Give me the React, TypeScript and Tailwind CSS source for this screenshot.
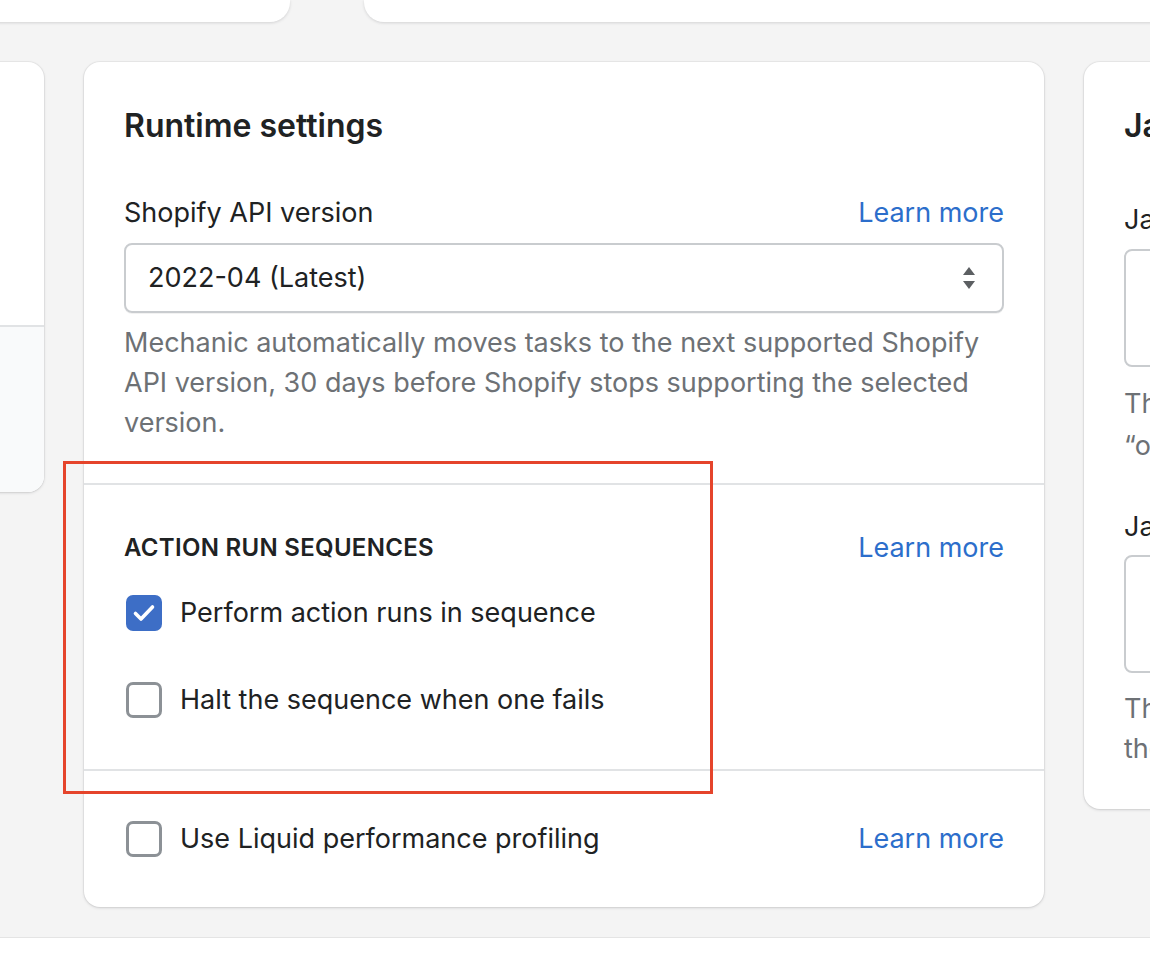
const font = { fontFamily: "Inter, 'Noto Sans', sans-serif" };

function Checkbox({ checked }: { checked?: boolean }) {
  if (checked) {
    return (
      <span className="ml-[2px] flex h-[36px] w-[36px] shrink-0 items-center justify-center rounded-[7px] bg-[#3d6ec6]">
        <svg width="36" height="36" viewBox="0 0 36 36" fill="none">
          <path d="M9.5 18.5l5.5 5.5 11.5-12" stroke="#fff" strokeWidth="3.6" strokeLinecap="round" strokeLinejoin="round" />
        </svg>
      </span>
    );
  }
  return <span className="ml-[2px] h-[36px] w-[36px] shrink-0 rounded-[7px] border-[3px] border-[#8c9196] bg-white" />;
}

function LearnMore() {
  return <a className="text-[27px] leading-[40px] text-[#2c6ecb]">Learn more</a>;
}

function CheckRow({ label, checked }: { label: string; checked?: boolean }) {
  return (
    <label className="flex h-[40px] items-center gap-[18px]">
      <Checkbox checked={checked} />
      <span className="text-[27px] leading-[40px] text-[#202223]">{label}</span>
    </label>
  );
}

function RuntimeCard() {
  return (
    <div className="w-[960px] shrink-0 rounded-[16px] bg-white shadow-[0_0_0_1px_rgba(63,63,68,0.05),0_1px_3px_rgba(63,63,68,0.18)]">
      <div className="px-[40px] pt-[44px] pb-[40px]">
        <h2 className="text-[32px] font-semibold leading-[40px] text-[#202223]">Runtime settings</h2>
        <div className="mt-[47px] flex items-center justify-between">
          <span className="text-[27px] leading-[40px] text-[#202223]">Shopify API version</span>
          <LearnMore />
        </div>
        <div className="mt-[10px] flex h-[70px] items-center justify-between rounded-[8px] border-2 border-[#c9cccf] pl-[22px] pr-[26px] shadow-[0_1px_0_rgba(0,0,0,0.05)]">
          <span className="text-[27px] text-[#202223]">2022-04 (Latest)</span>
          <svg width="14" height="22" viewBox="0 0 14 22">
            <path d="M7 0L13 8H1Z" fill="#5c5f62" />
            <path d="M7 22L13 14H1Z" fill="#5c5f62" />
          </svg>
        </div>
        <p className="mt-[10px] text-[27px] leading-[40px] text-[#6d7175]">
          Mechanic automatically moves tasks to the next supported Shopify API version, 30 days before Shopify stops supporting the selected version.
        </p>
      </div>
      <div className="border-t-2 border-[#e1e3e5] px-[40px] pt-[43px] pb-[49px]">
        <div className="flex items-center justify-between">
          <h3 className="text-[24px] font-semibold uppercase leading-[32px] tracking-[0.3px] text-[#202223]">Action run sequences</h3>
          <LearnMore />
        </div>
        <div className="mt-[25px] flex flex-col gap-[47px]">
          <CheckRow label="Perform action runs in sequence" checked />
          <CheckRow label="Halt the sequence when one fails" />
        </div>
      </div>
      <div className="flex items-center justify-between border-t-2 border-[#e1e3e5] px-[40px] pt-[48px] pb-[48px]">
        <CheckRow label="Use Liquid performance profiling" />
        <LearnMore />
      </div>
    </div>
  );
}

function JavaScriptCard() {
  return (
    <div className="w-[700px] shrink-0 self-start rounded-[16px] bg-white px-[40px] pt-[44px] pb-[40px] shadow-[0_0_0_1px_rgba(63,63,68,0.05),0_1px_3px_rgba(63,63,68,0.18)]">
      <h2 className="text-[32px] font-semibold leading-[40px] text-[#202223]">JavaScript</h2>
      <div className="mt-[54px] text-[27px] leading-[40px] text-[#202223]">JavaScript for the online store</div>
      <div className="mt-[9px] h-[118px] rounded-[8px] border-2 border-[#c9cccf]" />
      <p className="mt-[16px] whitespace-nowrap text-[27px] leading-[42px] text-[#6d7175]">
        This JavaScript is added to every page of the
        <br />
        “online store” theme.
      </p>
      <div className="mt-[40px] text-[27px] leading-[40px] text-[#202223]">JavaScript for the order status page</div>
      <div className="mt-[8px] h-[118px] rounded-[8px] border-2 border-[#c9cccf]" />
      <p className="mt-[16px] whitespace-nowrap text-[27px] leading-[40px] text-[#6d7175]">
        This JavaScript is added to the order status page,
        <br />
        the last page of checkout.
      </p>
    </div>
  );
}

export default function App() {
  return (
    <div style={font} className="relative h-[978px] w-[1150px] overflow-hidden bg-white">
      <div className="h-[938px] bg-[#f4f4f4] shadow-[inset_0_-1px_0_#e4e4e4]">
        <div className="ml-[-100px] flex gap-[74px]">
          <div className="h-[22px] w-[390px] shrink-0 rounded-b-[20px] bg-white shadow-[0_1px_3px_rgba(63,63,68,0.18)]" />
          <div className="h-[22px] w-[900px] shrink-0 rounded-b-[20px] bg-white shadow-[0_1px_3px_rgba(63,63,68,0.18)]" />
        </div>
        <div className="ml-[-156px] mt-[40px] flex items-start gap-[40px]">
          <div className="w-[200px] shrink-0 overflow-hidden rounded-[16px] bg-white shadow-[0_0_0_1px_rgba(63,63,68,0.05),0_1px_3px_rgba(63,63,68,0.18)]">
            <div className="h-[263px]" />
            <div className="h-[167px] border-t-2 border-[#e1e3e5] bg-[#f9fafb]" />
          </div>
          <RuntimeCard />
          <JavaScriptCard />
        </div>
      </div>
      <div className="pointer-events-none absolute left-[63px] top-[461px] h-[333px] w-[650px] border-[3px] border-[#e5442b]" />
    </div>
  );
}
